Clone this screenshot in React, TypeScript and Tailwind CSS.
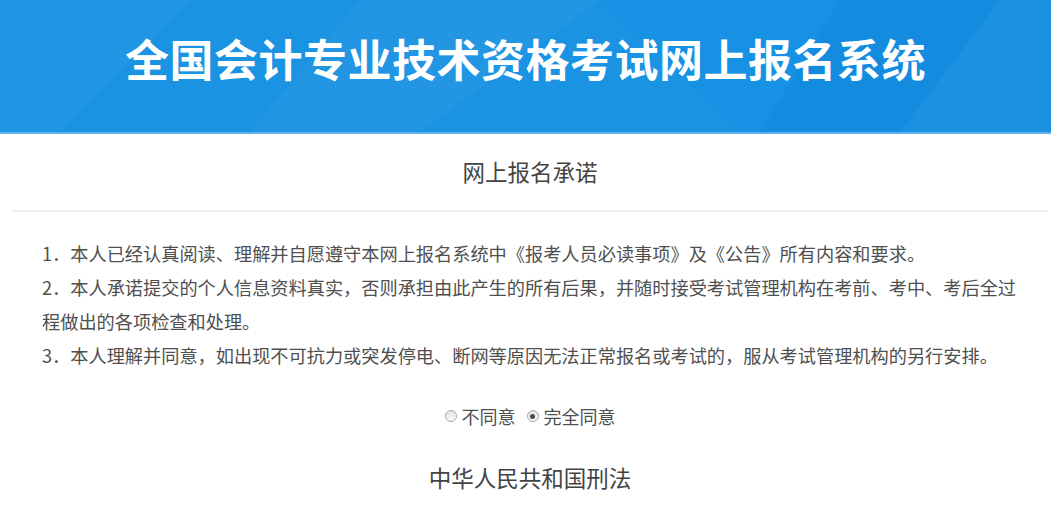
import React from "react";

function Radio({ checked }: { checked?: boolean }) {
  return (
    <span className="inline-flex h-[12px] w-[12px] items-center justify-center rounded-full border border-[#a9a9a9] bg-gradient-to-b from-[#e2e2e2] to-[#fafafa]">
      {checked && <span className="h-[5px] w-[5px] rounded-full bg-[#4a4a4a]" />}
    </span>
  );
}

export default function App() {
  return (
    <div className="w-[1051px] bg-white font-['Noto_Sans_CJK_SC','Microsoft_YaHei',sans-serif]">
      <header className="relative flex h-[134px] items-center justify-center overflow-hidden border-b-2 border-[#5fb1ee] bg-[#1691e3]">
        <svg className="absolute inset-0 h-full w-full" viewBox="0 0 1051 134" preserveAspectRatio="none">
          <polygon points="0,0 190,0 60,134 0,134" fill="#ffffff" opacity="0.05" />
          <polygon points="190,0 600,0 740,134 60,134" fill="#ffffff" opacity="0.025" />
          <polygon points="360,0 600,0 420,134 250,134" fill="#ffffff" opacity="0.03" />
          <polygon points="840,0 1051,0 1051,134 760,134" fill="#0b7fd6" opacity="0.25" />
          <polygon points="1000,0 1051,0 1051,134 900,134" fill="#ffffff" opacity="0.04" />
        </svg>
        <h1 className="relative pb-[16px] text-[44px] font-bold leading-none tracking-[0.5px] text-white">
          全国会计专业技术资格考试网上报名系统
        </h1>
      </header>

      <div className="ml-[12px] w-[1036px]">
        <div className="flex h-[78px] items-center justify-center border-b-2 border-[#f0f0f0] text-[22.5px] text-[#444]">
          网上报名承诺
        </div>

        <div className="pl-[30px] pr-[20px] pt-[24px] text-[18.2px] leading-[34px] text-[#4f4f4f]">
          <p>1．本人已经认真阅读、理解并自愿遵守本网上报名系统中《报考人员必读事项》及《公告》所有内容和要求。</p>
          <p>2．本人承诺提交的个人信息资料真实，否则承担由此产生的所有后果，并随时接受考试管理机构在考前、考中、考后全过程做出的各项检查和处理。</p>
          <p>3．本人理解并同意，如出现不可抗力或突发停电、断网等原因无法正常报名或考试的，服从考试管理机构的另行安排。</p>
        </div>

        <div className="mt-[32px] flex h-[24px] items-center justify-center text-[18px] text-[#4f4f4f]">
          <label className="flex items-center gap-[5px]">
            <Radio />
            <span>不同意</span>
          </label>
          <label className="ml-[11px] flex items-center gap-[5px]">
            <Radio checked />
            <span>完全同意</span>
          </label>
        </div>

        <div className="mt-[34px] text-center text-[22.5px] leading-[30px] text-[#444]">中华人民共和国刑法</div>
      </div>
    </div>
  );
}
